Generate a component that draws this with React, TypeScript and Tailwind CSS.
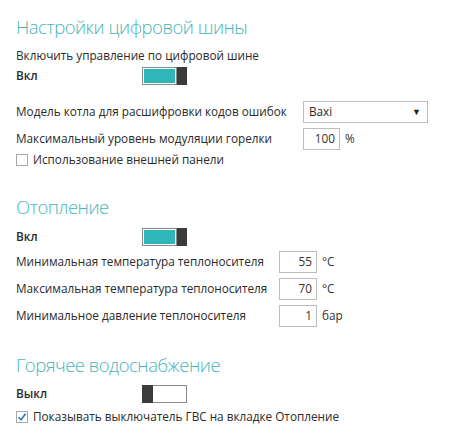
import React from 'react';

const font = { fontFamily: '"Open Sans", "Noto Sans", sans-serif' };

const Toggle: React.FC<{ on: boolean }> = ({ on }) =>
    on ? (
        <div className="flex h-[18px] w-[45px]">
            <div className="h-full w-[35px] border border-[#8c8c8c] bg-[#2fb6b9] shadow-[inset_0_0_0_1px_#ffffff]" />
            <div className="h-full w-[10px] bg-[#3b3b3b]" />
        </div>
    ) : (
        <div className="flex h-[18px] w-[45px]">
            <div className="h-full w-[11px] bg-[#3b3b3b]" />
            <div className="h-full flex-1 border border-l-0 border-[#8c8c8c] bg-white" />
        </div>
    );

const Checkbox: React.FC<{ checked?: boolean }> = ({ checked }) => (
    <div className="flex h-[12px] w-[12px] shrink-0 items-center justify-center border border-[#a9a9a9] bg-white">
        {checked && (
            <svg width="10" height="10" viewBox="0 0 10 10">
                <path d="M1.5 5.2 L4 7.8 L8.6 1.8" fill="none" stroke="#2b79bd" strokeWidth="1.6" />
            </svg>
        )}
    </div>
);

const NumInput: React.FC<{ value: string; unit: string; width: string }> = ({ value, unit, width }) => (
    <div className="flex items-center">
        <div className={`flex h-[22px] ${width} items-center justify-end border border-[#bdbdbd] bg-white pr-[4px] text-[#333]`}>
            {value}
        </div>
        <span className="ml-[5px] text-[#333]">{unit}</span>
    </div>
);

const Title: React.FC<{ children: React.ReactNode; className?: string }> = ({ children, className }) => (
    <div className={`h-[28px] whitespace-nowrap text-[18.5px] font-light leading-[28px] tracking-[-0.5px] text-[#4ab6b8] ${className ?? ''}`}>
        {children}
    </div>
);

const App: React.FC = () => {
    return (
        <div className="h-[440px] w-[449px] whitespace-nowrap bg-white pl-[16px] text-[11.75px] text-[#2b2b2b]" style={font}>
            {/* Цифровая шина */}
            <Title className="box-content pt-[13px]">Настройки цифровой шины</Title>
            <div className="mt-[5px] flex h-[20px] items-center">Включить управление по цифровой шине</div>
            <div className="mt-[1px] flex h-[18px] items-center">
                <span className="w-[126px] shrink-0 font-semibold">Вкл</span>
                <Toggle on />
            </div>

            <div className="mt-[16px] flex h-[22px] items-center">
                <span className="w-[287px] shrink-0">Модель котла для расшифровки кодов ошибок</span>
                <div className="flex h-[22px] w-[125px] items-center justify-between border border-[#bdbdbd] bg-white pl-[5px] pr-[6px]">
                    <span>Baxi</span>
                    <span className="text-[9px] text-[#222]">▼</span>
                </div>
            </div>
            <div className="mt-[5px] flex h-[22px] items-center">
                <span className="w-[287px] shrink-0">Максимальный уровень модуляции горелки</span>
                <NumInput value="100" unit="%" width="w-[37px]" />
            </div>
            <div className="flex h-[20px] items-center">
                <Checkbox />
                <span className="ml-[5px]">Использование внешней панели</span>
            </div>

            {/* Отопление */}
            <Title className="mt-[23px]">Отопление</Title>
            <div className="mt-[7px] flex h-[18px] items-center">
                <span className="w-[126px] shrink-0 font-semibold">Вкл</span>
                <Toggle on />
            </div>
            <div className="mt-[5px] flex h-[22px] items-center">
                <span className="w-[263px] shrink-0">Минимальная температура теплоносителя</span>
                <NumInput value="55" unit="°C" width="w-[38px]" />
            </div>
            <div className="mt-[5px] flex h-[22px] items-center">
                <span className="w-[263px] shrink-0">Максимальная температура теплоносителя</span>
                <NumInput value="70" unit="°C" width="w-[38px]" />
            </div>
            <div className="mt-[5px] flex h-[22px] items-center">
                <span className="w-[263px] shrink-0">Минимальное давление теплоносителя</span>
                <NumInput value="1" unit="бар" width="w-[38px]" />
            </div>

            {/* ГВС */}
            <Title className="mt-[24px]">Горячее водоснабжение</Title>
            <div className="mt-[6px] flex h-[18px] items-center">
                <span className="w-[126px] shrink-0 font-semibold">Выкл</span>
                <Toggle on={false} />
            </div>
            <div className="mt-[4px] flex h-[20px] items-center">
                <Checkbox checked />
                <span className="ml-[5px]">Показывать выключатель ГВС на вкладке Отопление</span>
            </div>
        </div>
    );
};

export default App;
